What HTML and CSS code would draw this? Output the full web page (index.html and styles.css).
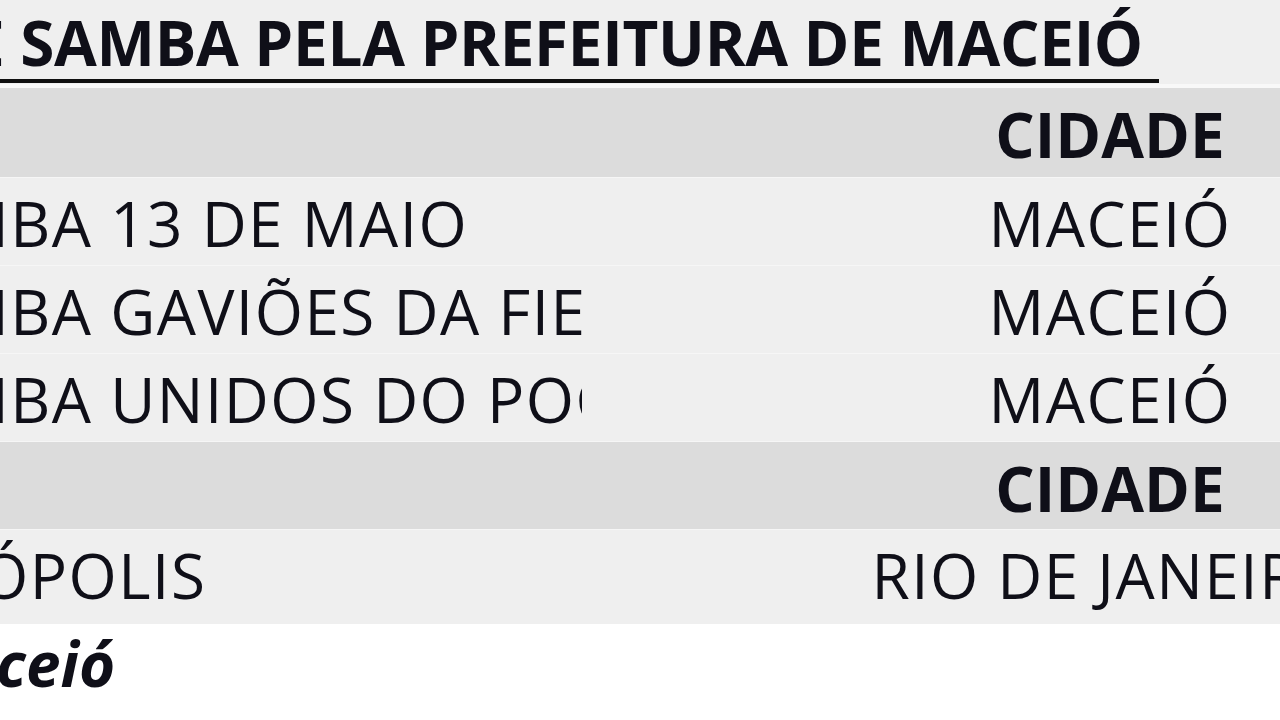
FILE: index.html
```html
<!DOCTYPE html>
<html lang="pt">
<head>
<meta charset="utf-8">
<title>Escolas de Samba</title>
<link rel="stylesheet" href="styles.css">
</head>
<body>
<div class="sheet">
  <div class="title-row">
    <div class="clip"><span class="title shift-title">E SAMBA PELA PREFEITURA DE MACEIÓ&nbsp;</span></div>
  </div>
  <div class="row head first">
    <div class="c1"></div><div class="c2"></div><div class="c3"><span>CIDADE</span></div>
  </div>
  <div class="row">
    <div class="c1 clip"><span class="shift-m">MBA 13 DE MAIO</span></div><div class="c2"></div><div class="c3"><span>MACEIÓ</span></div>
  </div>
  <div class="row">
    <div class="c1 clip"><span class="shift-m">MBA GAVIÕES DA FIEL</span></div><div class="c2"></div><div class="c3"><span>MACEIÓ</span></div>
  </div>
  <div class="row">
    <div class="c1 clip"><span class="shift-m">MBA UNIDOS DO POÇO</span></div><div class="c2"></div><div class="c3"><span>MACEIÓ</span></div>
  </div>
  <div class="row head">
    <div class="c1"></div><div class="c2"></div><div class="c3"><span>CIDADE</span></div>
  </div>
  <div class="row last">
    <div class="c1 clip"><span class="shift-o">ÓPOLIS</span></div><div class="c2"></div><div class="c3 clip-right"><span>RIO DE JANEIRO</span></div>
  </div>
  <div class="foot">
    <div class="clip"><span class="note">ceió</span></div>
  </div>
</div>
</body>
</html>
```
FILE: styles.css
```css
html, body {
  margin: 0;
  padding: 0;
  background: #ffffff;
}
body {
  width: 1280px;
  height: 720px;
  overflow: hidden;
  font-family: "Open Sans", "Noto Sans", "DejaVu Sans", sans-serif;
  color: #0f0f18;
}
.sheet {
  display: flex;
  flex-direction: column;
  width: 1280px;
  overflow: hidden;
}
.clip {
  overflow: hidden;
  white-space: nowrap;
}
.title-row {
  height: 84px;
  background: #efefef;
  border-bottom: 4px solid #f8f8f8;
}
.title-row .clip {
  height: 84px;
  padding-top: 5px;
  box-sizing: border-box;
}
.title {
  display: inline-block;
  font-weight: 700;
  font-size: 62px;
  line-height: 74px;
  letter-spacing: -0.3px;
  border-bottom: 4px solid #0f0f0f;
}
.shift-title { margin-left: -30px; }
.row {
  display: grid;
  grid-template-columns: 582px 358px 340px;
  height: 87px;
  background: #efefef;
  border-bottom: 1px solid #f6f6f6;
  font-size: 62px;
  line-height: 90px;
  letter-spacing: 1.5px;
  overflow: hidden;
}
.row.head {
  background: #dcdcdc;
  font-weight: 700;
  letter-spacing: 0;
  line-height: 93px;
}
.row.head.first { height: 89px; }
.row.last { height: 94px; border-bottom: none; }
.c1 {
  height: 100%;
}
.c3 {
  display: flex;
  justify-content: center;
  white-space: nowrap;
}
.shift-m { display: inline-block; margin-left: -47px; }
.shift-o { display: inline-block; margin-left: -20px; }
.foot {
  height: 98px;
  background: #ffffff;
}
.note {
  display: inline-block;
  font-weight: 700;
  font-style: italic;
  font-size: 62px;
  line-height: 78px;
  margin-left: -4px;
}
```
